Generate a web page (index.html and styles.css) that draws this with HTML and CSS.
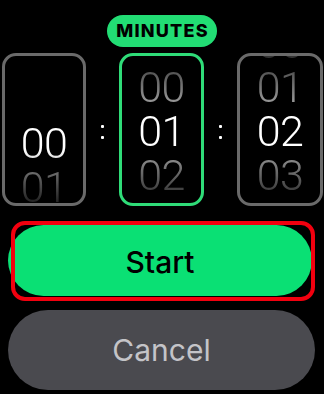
FILE: index.html
```html
<!DOCTYPE html>
<html>
<head>
<meta charset="utf-8">
<link rel="stylesheet" href="styles.css">
</head>
<body>
<div class="screen">
  <div class="label-row"><span class="pill">MINUTES</span></div>
  <div class="picker">
    <div class="wheel">
      <div class="view">
        <div class="list list-hours">
          <div class="num sel">00</div>
          <div class="num">01</div>
        </div>
      </div>
    </div>
    <div class="colon"><span class="dot"></span><span class="dot"></span></div>
    <div class="wheel active">
      <div class="view">
        <div class="list list-min">
          <div class="num">00</div>
          <div class="num sel">01</div>
          <div class="num">02</div>
        </div>
      </div>
    </div>
    <div class="colon"><span class="dot"></span><span class="dot"></span></div>
    <div class="wheel">
      <div class="view">
        <div class="list list-sec">
          <div class="num">00</div>
          <div class="num">01</div>
          <div class="num sel">02</div>
          <div class="num">03</div>
        </div>
      </div>
    </div>
  </div>
  <div class="start-wrap">
    <div class="start">Start</div>
    <div class="focus-ring"></div>
  </div>
  <div class="cancel">Cancel</div>
</div>
</body>
</html>
```
FILE: styles.css
```css
html, body {
  margin: 0;
  padding: 0;
  background: #000;
}
body {
  width: 324px;
  height: 394px;
  overflow: hidden;
  font-family: Inter, "Liberation Sans", sans-serif;
}
.screen {
  padding-top: 15px;
}
.label-row {
  display: flex;
  justify-content: center;
}
.pill {
  width: 110px;
  height: 32px;
  border-radius: 16px;
  background: #22dd74;
  color: #000;
  font-weight: 800;
  font-size: 18px;
  letter-spacing: 1.2px;
  display: flex;
  align-items: center;
  justify-content: center;
  line-height: 1;
  padding-left: 1px;
  box-sizing: border-box;
}
.picker {
  margin-top: 6px;
  margin-left: 2px;
  display: grid;
  grid-template-columns: 84px 33px 85px 33px 86px;
  height: 153px;
}
.wheel {
  border: 3px solid #6a6a6a;
  border-radius: 14px;
  overflow: hidden;
  box-sizing: border-box;
  height: 153px;
}
.wheel.active {
  border-color: #2fdc78;
}
.view {
  height: 100%;
  overflow: hidden;
  -webkit-mask-image: linear-gradient(to bottom, rgba(0,0,0,0.3) 0%, #000 34%, #000 64%, rgba(0,0,0,0.2) 100%);
  mask-image: linear-gradient(to bottom, rgba(0,0,0,0.3) 0%, #000 34%, #000 64%, rgba(0,0,0,0.2) 100%);
}
.list {
  display: flex;
  flex-direction: column;
  align-items: center;
}
.list-hours { margin-top: 65px; }
.list-min { margin-top: 9px; }
.list-sec { margin-top: -35px; }
.num {
  font-family: Roboto, "Liberation Sans", sans-serif;
  font-weight: 300;
  font-size: 43px;
  line-height: 44px;
  height: 44px;
  color: #a0a0a0;
  letter-spacing: -0.5px;
}
.num.sel {
  color: #fff;
}
.colon {
  display: flex;
  flex-direction: column;
  align-items: center;
  justify-content: center;
  gap: 8px;
  padding-top: 5px;
}
.dot {
  width: 3px;
  height: 3px;
  background: #fff;
  border-radius: 1px;
}
.start-wrap {
  position: relative;
  margin-top: 15px;
  margin-left: 8px;
  width: 307px;
  height: 80px;
  padding-top: 4px;
  box-sizing: border-box;
}
.start {
  width: 304px;
  height: 71px;
  border-radius: 36px;
  background: #0ae074;
  color: #000;
  font-size: 30px;
  font-weight: 500;
  display: flex;
  align-items: center;
  justify-content: center;
  padding-top: 3px;
  box-sizing: border-box;
}
.focus-ring {
  position: absolute;
  left: 3px;
  top: 0;
  right: 0;
  bottom: 0;
  border: 4px solid #f2000f;
  border-radius: 14px;
}
.cancel {
  margin-top: 9px;
  margin-left: 8px;
  width: 307px;
  height: 80px;
  border-radius: 40px;
  background: #4a4a4f;
  color: #c4c4c8;
  font-size: 30px;
  font-weight: 400;
  display: flex;
  align-items: center;
  justify-content: center;
}
```
